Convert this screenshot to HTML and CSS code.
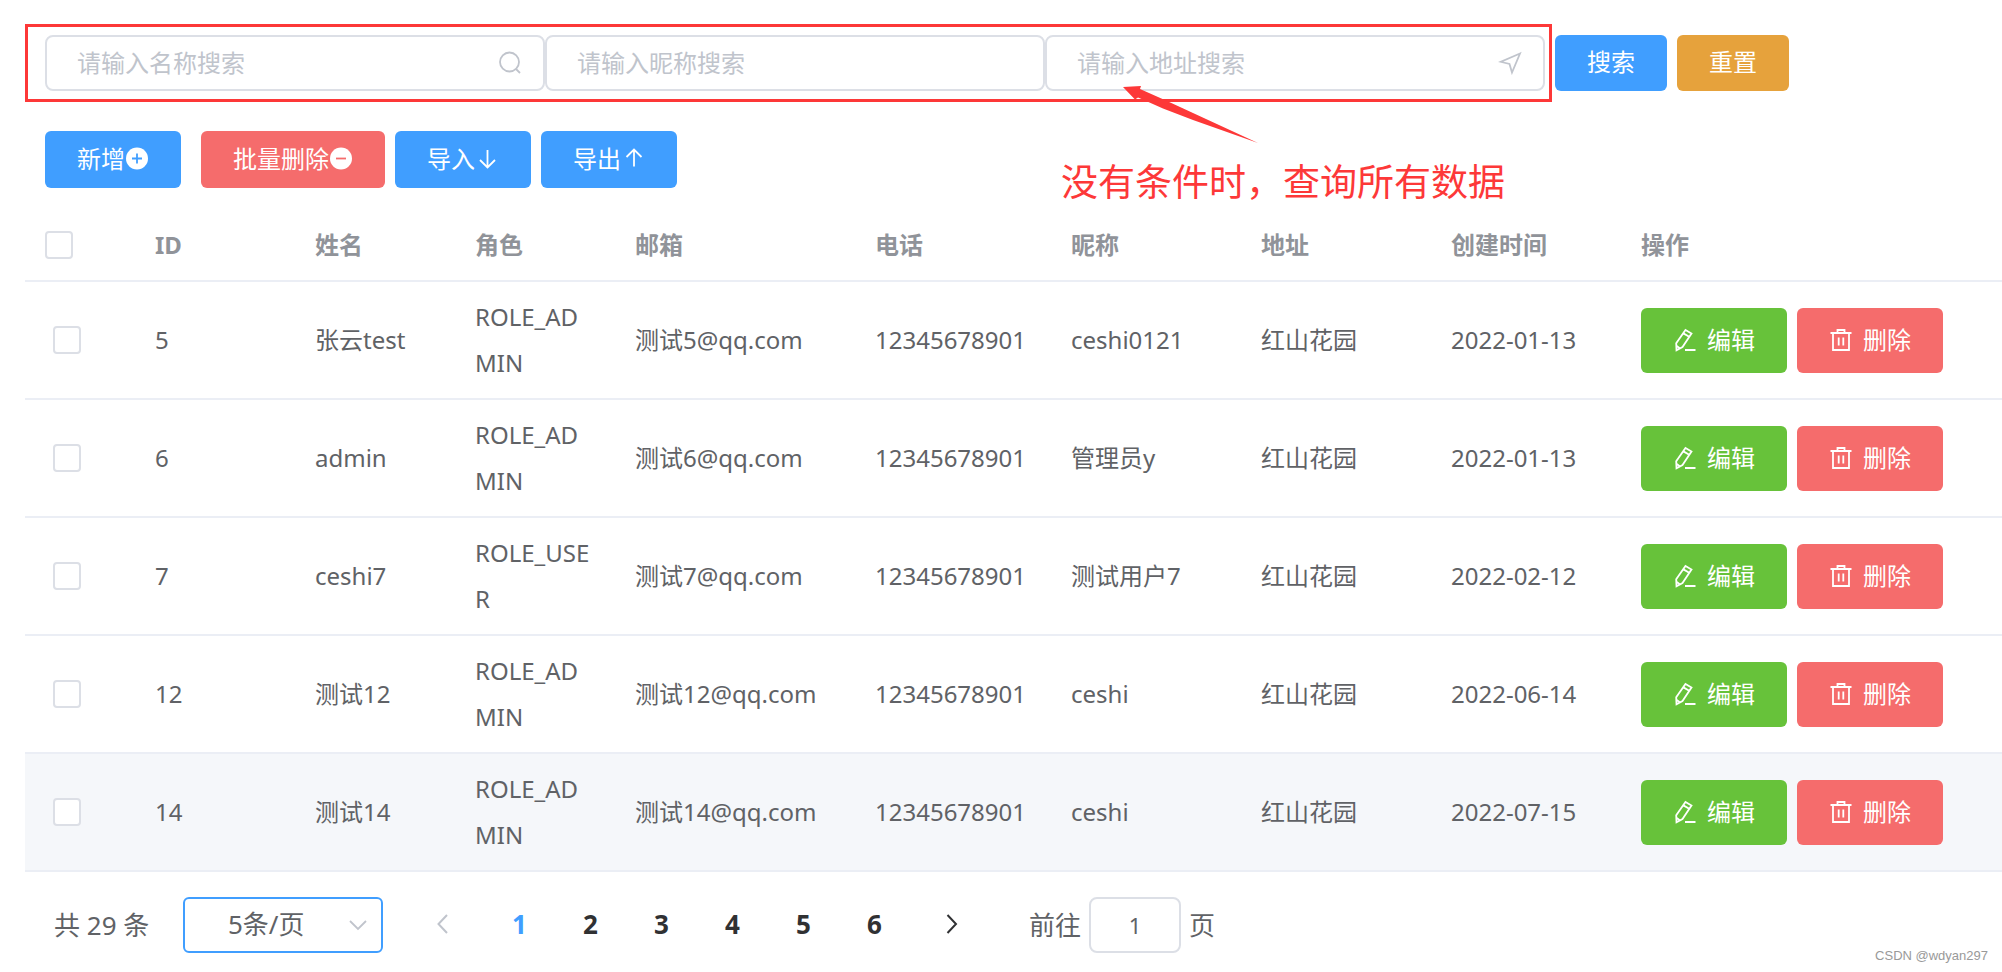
FILE: index.html
```html
<!DOCTYPE html>
<html lang="zh-CN">
<head>
<meta charset="utf-8">
<title>用户管理</title>
<link rel="stylesheet" href="styles.css">
</head>
<body>
<svg class="sprite" aria-hidden="true">
  <symbol id="i-edit" viewBox="0 0 24 24"><path d="M12.500 2 18.500 5.500 9.500 19 3.500 22.200 3.200 15.200ZM10.400 5.400 16.200 8.800M3.400 17.600 7 20.500M12 22H22.500"/></symbol>
  <symbol id="i-trash" viewBox="0 0 24 24"><path d="M1.500 5H22.500M4 5V22H20V5M8.500 5V2H15.500V5M9.700 9.500V17.500M14.300 9.500V17.500"/></symbol>
</svg>
<main class="page">
  <form class="search">
    <div class="search-fields">
      <div class="field">
        <input class="input" type="text" placeholder="请输入名称搜索" aria-label="名称">
        <svg class="field-icon" viewBox="0 0 24 24"><circle cx="11.500" cy="11" r="9.500"/><path d="M18 18 22 22"/></svg>
      </div>
      <div class="field">
        <input class="input" type="text" placeholder="请输入昵称搜索" aria-label="昵称">
      </div>
      <div class="field">
        <input class="input" type="text" placeholder="请输入地址搜索" aria-label="地址">
        <svg class="field-icon" viewBox="0 0 24 24"><path d="M22 2.500 2.500 10.800 11.500 13 14 21.500Z"/></svg>
      </div>
    </div>
    <div class="search-actions">
      <button class="btn primary" type="button">搜索</button>
      <button class="btn warning" type="button">重置</button>
    </div>
  </form>

  <div class="toolbar">
    <button class="btn primary add" type="button">新增<svg class="icon" viewBox="0 0 24 24"><circle class="solid" cx="12" cy="11.500" r="11"/><path class="blue" d="M7 11.500H17M12 6.500V16.500"/></svg></button>
    <button class="btn danger" type="button">批量删除<svg class="icon" viewBox="0 0 24 24"><circle class="solid" cx="12" cy="11.500" r="11"/><path class="red" d="M7 11.500H17"/></svg></button>
    <button class="btn primary" type="button">导入<svg class="icon" viewBox="0 0 24 24"><path d="M12.500 3V20.500M5 13 12.500 20.500 20 13"/></svg></button>
    <button class="btn primary" type="button">导出<svg class="icon" viewBox="0 0 24 24"><path d="M13 19.500V2.500M5.500 10 13 2.500 20.500 10"/></svg></button>
  </div>

  <table class="table">
    <colgroup><col class="c-check"><col class="c-s"><col class="c-s"><col class="c-s"><col class="c-mail"><col class="c-phone"><col class="c-m"><col class="c-m"><col class="c-m"><col></colgroup>
    <thead>
      <tr><th><input class="check" type="checkbox" aria-label="全选"></th><th>ID</th><th>姓名</th><th>角色</th><th>邮箱</th><th>电话</th><th>昵称</th><th>地址</th><th>创建时间</th><th>操作</th></tr>
    </thead>
    <tbody>
      <tr><td><input class="check" type="checkbox" aria-label="选择 5"></td><td>5</td><td>张云test</td><td>ROLE_ADMIN</td><td>测试5@qq.com</td><td>12345678901</td><td>ceshi0121</td><td>红山花园</td><td>2022-01-13</td><td><div class="row-actions"><button class="btn success" type="button"><svg class="icon"><use href="#i-edit"/></svg>编辑</button><button class="btn danger" type="button"><svg class="icon"><use href="#i-trash"/></svg>删除</button></div></td></tr>
      <tr><td><input class="check" type="checkbox" aria-label="选择 6"></td><td>6</td><td>admin</td><td>ROLE_ADMIN</td><td>测试6@qq.com</td><td>12345678901</td><td>管理员y</td><td>红山花园</td><td>2022-01-13</td><td><div class="row-actions"><button class="btn success" type="button"><svg class="icon"><use href="#i-edit"/></svg>编辑</button><button class="btn danger" type="button"><svg class="icon"><use href="#i-trash"/></svg>删除</button></div></td></tr>
      <tr><td><input class="check" type="checkbox" aria-label="选择 7"></td><td>7</td><td>ceshi7</td><td>ROLE_USER</td><td>测试7@qq.com</td><td>12345678901</td><td>测试用户7</td><td>红山花园</td><td>2022-02-12</td><td><div class="row-actions"><button class="btn success" type="button"><svg class="icon"><use href="#i-edit"/></svg>编辑</button><button class="btn danger" type="button"><svg class="icon"><use href="#i-trash"/></svg>删除</button></div></td></tr>
      <tr><td><input class="check" type="checkbox" aria-label="选择 12"></td><td>12</td><td>测试12</td><td>ROLE_ADMIN</td><td>测试12@qq.com</td><td>12345678901</td><td>ceshi</td><td>红山花园</td><td>2022-06-14</td><td><div class="row-actions"><button class="btn success" type="button"><svg class="icon"><use href="#i-edit"/></svg>编辑</button><button class="btn danger" type="button"><svg class="icon"><use href="#i-trash"/></svg>删除</button></div></td></tr>
      <tr class="active"><td><input class="check" type="checkbox" aria-label="选择 14"></td><td>14</td><td>测试14</td><td>ROLE_ADMIN</td><td>测试14@qq.com</td><td>12345678901</td><td>ceshi</td><td>红山花园</td><td>2022-07-15</td><td><div class="row-actions"><button class="btn success" type="button"><svg class="icon"><use href="#i-edit"/></svg>编辑</button><button class="btn danger" type="button"><svg class="icon"><use href="#i-trash"/></svg>删除</button></div></td></tr>
    </tbody>
  </table>

  <nav class="pagination" aria-label="分页">
    <span class="total">共 29 条</span>
    <div class="size">
      <select class="size-select" aria-label="每页条数"><option>5条/页</option></select>
      <svg class="size-arrow" viewBox="0 0 24 24"><path d="M4 8 12 16 20 8"/></svg>
    </div>
    <button class="turn prev" type="button" aria-label="上一页" disabled><svg class="icon" viewBox="0 0 24 24"><path d="M16 3 7.500 12 16 21"/></svg></button>
    <button class="num current" type="button">1</button>
    <button class="num" type="button">2</button>
    <button class="num" type="button">3</button>
    <button class="num" type="button">4</button>
    <button class="num" type="button">5</button>
    <button class="num" type="button">6</button>
    <button class="turn next" type="button" aria-label="下一页"><svg class="icon" viewBox="0 0 24 24"><path d="M7.500 3 16 12 7.500 21"/></svg></button>
    <label class="jump">前往<input class="input jump-input" type="text" value="1">页</label>
  </nav>

  <svg class="arrow" viewBox="0 0 136 58" aria-hidden="true"><path d="M0 1 18 0 17 3 44 15 135 57 70 34 40 22.500 22 14.500 15 11.500 12 13.500Z"/></svg>
  <p class="note">没有条件时，查询所有数据</p>
  <small class="watermark">CSDN @wdyan297</small>
</main>
</body>
</html>
```

FILE: styles.css
```css
* { box-sizing: border-box; }

body {
  margin: 0;
  background: #fff;
  color: #606266;
  font: 24px/46px "Noto Sans", "Noto Sans CJK SC", sans-serif;
}

button, input, select { font: inherit; color: inherit; }

.sprite { position: absolute; width: 0; height: 0; }

.page {
  position: relative;
  min-height: 100vh;
  padding: 24px 0 0 25px;
}

.search { display: flex; align-items: center; gap: 3px; }

.search-fields {
  display: flex;
  flex: 0 1 1527px;
  padding: 8px 4px 8px 17px;
  border: 3px solid #fd3838;
}

.field { position: relative; flex: 1 1 0; min-width: 0; }

.input {
  display: block;
  width: 100%;
  height: 56px;
  padding: 0 30px 2px;
  border: 2px solid #dcdfe6;
  border-radius: 8px;
  background: #fff;
  outline: 0;
}
.input::placeholder { color: #c0c4cc; opacity: 1; }

.field-icon {
  position: absolute;
  top: 16px;
  right: 23px;
  width: 24px;
  height: 24px;
  color: #c0c4cc;
}

svg { fill: none; stroke: currentColor; stroke-width: 1.8; }

.search-actions { display: flex; gap: 10px; }

.btn {
  display: inline-flex;
  align-items: center;
  justify-content: center;
  height: 56px;
  padding: 0 32px 2px;
  border: 0;
  border-radius: 6px;
  color: #fff;
  white-space: nowrap;
}
.primary { background: #409eff; }
.warning { background: #e6a23c; }
.danger { background: #f56c6c; }
.success { background: #67c23a; }

.icon { flex: none; width: 24px; height: 24px; }
.solid { fill: #fff; stroke: none; }
.blue { stroke: #409eff; }
.red { stroke: #f56c6c; }

.toolbar { display: flex; gap: 10px; margin: 29px 0 22px 20px; }
.toolbar .btn { height: 57px; }
.toolbar .add { margin-right: 10px; }

.table {
  width: 100%;
  table-layout: fixed;
  border-collapse: separate;
  border-spacing: 0;
}
.c-check { width: 110px; }
.c-s { width: 160px; }
.c-mail { width: 240px; }
.c-phone { width: 196px; }
.c-m { width: 190px; }

.table th, .table td {
  padding: 12px 20px;
  border-bottom: 2px solid #ebeef5;
  text-align: left;
  vertical-align: middle;
  word-break: break-all;
}
.table th { color: #909399; font-weight: 700; }
.table td:first-child { padding-left: 28px; }
.active td { background: #f5f7fa; }

.check {
  appearance: none;
  display: block;
  width: 28px;
  height: 28px;
  margin: 0;
  border: 2px solid #dcdfe6;
  border-radius: 4px;
  background: #fff;
}

.row-actions { display: flex; gap: 10px; }
.row-actions .btn { height: 65px; padding-bottom: 0; gap: 10px; }

.pagination {
  display: flex;
  align-items: center;
  padding: 25px 0 0 29px;
  font-size: 26px;
}
.total { width: 129px; }

.size { position: relative; width: 200px; margin-right: 18px; }
.size-select {
  appearance: none;
  display: block;
  width: 100%;
  height: 56px;
  padding: 0 43px 2px;
  border: 2px solid #409eff;
  border-radius: 6px;
  background: #fff;
}
.size-arrow {
  position: absolute;
  top: 16px;
  right: 13px;
  width: 24px;
  height: 24px;
  color: #c0c4cc;
  pointer-events: none;
}

.turn, .num {
  display: flex;
  align-items: center;
  justify-content: center;
  height: 56px;
  padding: 0 0 2px;
  border: 0;
  background: none;
  color: #303133;
}
.turn { width: 83px; }
.turn svg { stroke-width: 2; }
.prev { color: #c0c4cc; }
.num { width: 71px; font-weight: 700; }
.current { color: #409eff; }

.jump { display: flex; align-items: center; gap: 8px; margin-left: 36px; }
.jump-input { width: 92px; padding-bottom: 0; font-size: 22px; text-align: center; }

.arrow {
  position: absolute;
  top: 86px;
  left: 1123px;
  width: 136px;
  height: 58px;
  fill: #fd3838;
  stroke: none;
}
.note {
  position: absolute;
  top: 159px;
  left: 1061px;
  margin: 0;
  color: #fd3838;
  font-size: 37px;
  white-space: nowrap;
}
.watermark {
  position: absolute;
  right: 14px;
  bottom: 7px;
  color: #999;
  font: 13px/18px "Liberation Sans", Arial, sans-serif;
}
```
